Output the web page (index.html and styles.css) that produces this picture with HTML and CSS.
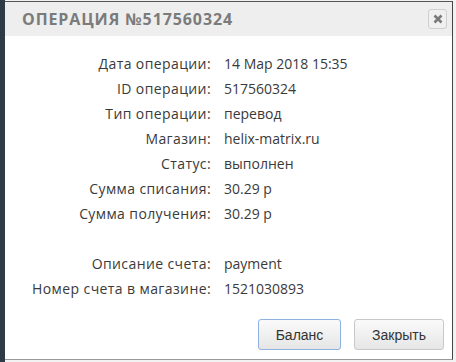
FILE: index.html
```html
<!DOCTYPE html>
<html>
<head>
<meta charset="utf-8">
<link rel="stylesheet" href="styles.css">
</head>
<body>
<div class="dialog">
  <div class="header">
    <span class="title">Операция №517560324</span>
    <button class="close" aria-label="Закрыть">
      <svg width="10" height="10" viewBox="0 0 10 10"><path d="M1.5 1.5 L8.5 8.5 M8.5 1.5 L1.5 8.5" stroke="#7a7a7a" stroke-width="2.6" stroke-linecap="butt"/></svg>
    </button>
  </div>
  <div class="content">
    <div class="rows">
      <div class="label">Дата операции:</div><div class="value">14 Мар 2018 15:35</div>
      <div class="label">ID операции:</div><div class="value">517560324</div>
      <div class="label">Тип операции:</div><div class="value">перевод</div>
      <div class="label">Магазин:</div><div class="value">helix-matrix.ru</div>
      <div class="label">Статус:</div><div class="value">выполнен</div>
      <div class="label">Сумма списания:</div><div class="value">30.29 р</div>
      <div class="label">Сумма получения:</div><div class="value">30.29 р</div>
      <div class="label"></div><div class="value"></div>
      <div class="label">Описание счета:</div><div class="value">payment</div>
      <div class="label">Номер счета в магазине:</div><div class="value">1521030893</div>
    </div>
  </div>
  <div class="footer">
    <button class="btn focused">Баланс</button>
    <button class="btn">Закрыть</button>
  </div>
</div>
</body>
</html>
```
FILE: styles.css
```css
html, body {
  margin: 0;
  padding: 0;
}
body {
  width: 456px;
  height: 362px;
  overflow: hidden;
  background: linear-gradient(to right, #2d3b47 0, #2d3b47 5px, #f2f2f2 5px);
  font-family: "Open Sans", "Liberation Sans", sans-serif;
}
.dialog {
  margin: 1px 0 0 5px;
  width: 448px;
  height: 359px;
  background: #fff;
  border-right: 1px solid #444;
  border-bottom: 1px solid #999;
  border-top: 1px solid #555;
  box-sizing: border-box;
  display: flex;
  flex-direction: column;
}
.header {
  height: 34px;
  background: #eeeeee;
  display: flex;
  align-items: center;
  justify-content: space-between;
  padding: 0 5px 0 17px;
  flex: none;
}
.title {
  text-transform: uppercase;
  font-weight: 700;
  font-size: 16px;
  letter-spacing: 0.9px;
  color: #7b7b7b;
}
.close {
  width: 19px;
  height: 20px;
  border: 1px solid #cfcfcf;
  border-radius: 3px;
  background: #f0f0f0;
  padding: 0;
  display: flex;
  align-items: center;
  justify-content: center;
}
.content {
  padding-top: 15px;
  flex: 1;
}
.rows {
  display: grid;
  grid-template-columns: 206px 1fr;
  column-gap: 13px;
  grid-auto-rows: 25px;
  align-items: center;
  font-size: 14px;
  color: #3a3a3a;
}
.label {
  text-align: right;
  letter-spacing: 0.4px;
}
.footer {
  display: flex;
  justify-content: flex-end;
  gap: 13px;
  padding: 0 8px 9px 0;
}
.btn {
  font-family: "Liberation Sans", Arial, sans-serif;
  font-size: 14px;
  color: #333;
  height: 31px;
  padding: 0 14px;
  border: 1px solid #c8c8c8;
  border-radius: 3px;
  background: linear-gradient(#fafafa, #e6e6e6);
}
.btn.focused {
  border-color: #8fb1e0;
  width: 83px;
}
.btn:not(.focused) {
  width: 90px;
}
```
